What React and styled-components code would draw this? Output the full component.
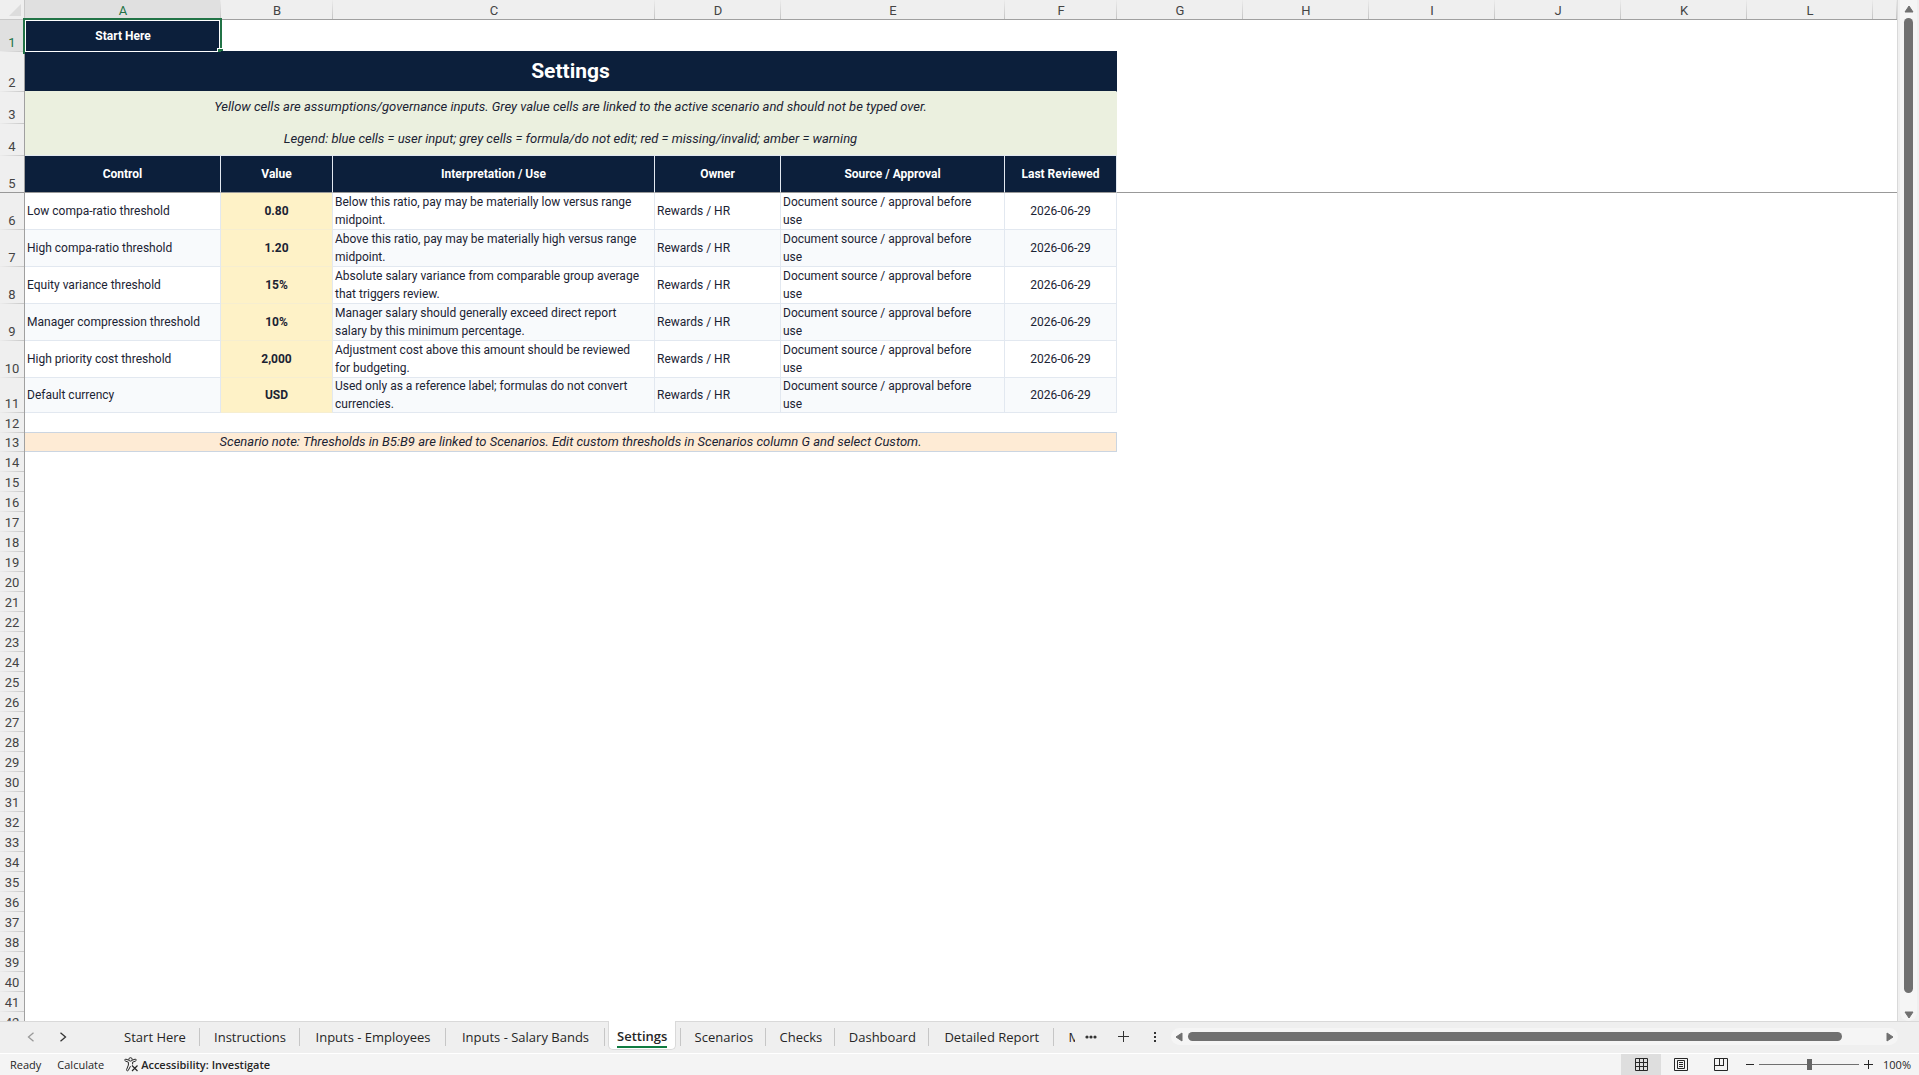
import React, { useState } from 'react';
import styled, { createGlobalStyle, css } from 'styled-components';

const navy = '#0c1f3b';
const green = '#217346';
const rule = '#e2e8f0';
const sage = '#ebf0df';
const chrome = '#efefef';
const sheetFont = "Roboto, 'Liberation Sans', sans-serif";
const uiFont = "'Open Sans', 'Noto Sans', sans-serif";

const GlobalStyle = createGlobalStyle`
  *, *::before, *::after { box-sizing: border-box; }
  body { margin: 0; background: ${chrome}; }
  button { border: 0; padding: 0; background: none; font: inherit; color: inherit; }
`;

const Window = styled.div`
  display: flex;
  flex-direction: column;
  height: 100vh;
  overflow: hidden;
  font-family: ${uiFont};
  color: #262626;
`;

const Workspace = styled.main`
  flex: 1;
  min-height: 0;
  display: grid;
  grid-template-columns: minmax(0, 1fr) 21px;
`;

const SheetPane = styled.div`
  min-height: 0;
  overflow: hidden;
  background: #fff;
  border-right: 1px solid #d9d9d9;
`;

const Sheet = styled.table`
  width: 100%;
  table-layout: fixed;
  border-collapse: separate;
  border-spacing: 0;
  font-family: ${sheetFont};
  font-size: 12px;
  line-height: 18px;
`;

const Col = styled.col`
  width: ${(p) => (p.$w ? `${p.$w}px` : 'auto')};
`;

const ColumnHead = styled.th`
  height: 20px;
  padding: 2px 0 0;
  border-bottom: 1px solid #a0a0a0;
  background: linear-gradient(#ececec, #c4c4c4) right / 1px 100% no-repeat,
    ${(p) => (p.$on ? '#e0e0e0' : chrome)};
  color: ${(p) => (p.$on ? green : '#444')};
  font-size: 13px;
  font-weight: 400;
  line-height: 17px;
  text-align: center;
`;

const Corner = styled.th`
  padding: 0;
  border-right: 1px solid #c8c8c8;
  border-bottom: 1px solid #c8c8c8;
  background: ${chrome};
`;

const CornerMark = styled.svg`
  display: block;
  margin: 0 3px 0 auto;
`;

const RowHead = styled.th`
  height: ${(p) => p.$h}px;
  padding: 0;
  vertical-align: bottom;
  border-right: 1px solid #a0a0a0;
  background: ${(p) =>
      p.$frozen ? 'linear-gradient(#999, #999)' : 'linear-gradient(90deg, #ececec, #c8c8c8)'}
      bottom / 100% 1px no-repeat,
    ${(p) => (p.$on ? '#e0e0e0' : chrome)};
  color: ${(p) => (p.$on ? green : '#444')};
  font-size: 13px;
  font-weight: 400;
  line-height: 19px;
  text-align: center;
`;

const cell = css`
  position: relative;
  padding: 0;
  vertical-align: top;
  border: 0 solid ${rule};
  border-right-width: ${(p) => (p.$open ? 0 : 1)}px;
  border-right-color: ${(p) => p.$side || rule};
  border-bottom-width: ${(p) => (p.$line ? 1 : 0)}px;
  border-bottom-color: ${(p) => p.$line};
  background: ${(p) => p.$fill || 'transparent'};
  font-weight: ${(p) => (p.$bold ? 700 : 400)};
  font-style: ${(p) => (p.$italic ? 'italic' : 'normal')};
  text-align: ${(p) => (p.$center ? 'center' : 'left')};
  color: ${(p) => p.$ink || '#1b2333'};
`;

const Cell = styled.td`${cell}`;
const HeadCell = styled.th`${cell}`;

const CellText = styled.div`
  display: flex;
  align-items: center;
  justify-content: ${(p) => (p.$center ? 'center' : 'flex-start')};
  height: ${(p) => p.$h - 1}px;
  padding: 0 2px;
  white-space: pre-line;
`;

const Title = styled.h1`
  margin: 0;
  font-size: 21px;
  line-height: 39px;
  text-align: center;
`;

const Note = styled.div`
  font-size: 13px;
  line-height: ${(p) => p.$h}px;
  text-align: center;
`;

const StartLink = styled.a`
  display: block;
  color: #fff;
  line-height: 32px;
  text-decoration: none;
`;

const Selection = styled.span`
  position: absolute;
  inset: -2px -1px -2px -2px;
  border: 2px solid ${green};
  box-shadow: inset 0 0 0 1px #fff;
  pointer-events: none;

  &::after {
    content: '';
    position: absolute;
    right: -3px;
    bottom: -3px;
    width: 5px;
    height: 6px;
    background: ${green};
    box-shadow: -1px -1px 0 #fff;
  }
`;

const VTrack = styled.div`
  display: flex;
  flex-direction: column;
  align-items: center;
  width: 17px;
  margin-left: 2px;
  padding: 5px 0 2px;
  border-radius: 0 0 9px 9px;
  background: #f5f5f5;
`;

const VThumb = styled.div`
  flex: 1;
  width: 9px;
  margin: 5px 0 18px;
  border-radius: 5px;
  background: #707070;
`;

const ArrowButton = styled.button`
  display: flex;
  align-items: center;
  justify-content: center;
  width: ${(p) => p.$w}px;
  height: ${(p) => p.$h}px;
`;

const BottomBar = styled.div`
  display: grid;
  grid-template-columns: minmax(0, 1fr) 38.3%;
  height: 32px;
  padding-right: 21px;
  background: ${chrome};
  box-shadow: inset 0 1px 0 #d9d9d9;
`;

const TabArea = styled.div`
  display: flex;
  min-width: 0;
`;

const NavButtons = styled.div`
  display: flex;
  width: 110px;
  flex-shrink: 0;
  padding-left: 15px;
`;

const IconButton = styled.button`
  display: flex;
  flex-shrink: 0;
  align-items: center;
  justify-content: center;
  width: ${(p) => p.$w}px;
  height: 31px;
  color: ${(p) => (p.$dim ? '#999' : '#333')};
`;

const Tabs = styled.nav`
  display: flex;
  flex: 1;
  min-width: 0;
  overflow: hidden;
`;

const divider = css`
  position: relative;
  flex-shrink: 0;

  &::after {
    content: '';
    position: absolute;
    right: 0;
    top: 7px;
    width: 1px;
    height: 18px;
    background: #c6c6c6;
  }
`;

const Tab = styled.button`
  ${divider}
  width: ${(p) => p.$w}px;
  height: 32px;
  font-size: 13px;
  line-height: 32px;
  white-space: nowrap;
`;

const ActiveSlot = styled.div`
  ${divider}
  padding: 0 5px 0 3px;
`;

const ActiveTab = styled.button`
  height: 29px;
  padding: 0 8px;
  border: 1px solid #d9d9d9;
  border-top: 0;
  border-radius: 0 0 5px 5px;
  background: #fff;
  font-size: 13px;
  font-weight: 600;
`;

const ActiveLabel = styled.span`
  display: block;
  height: 25px;
  border-bottom: 2px solid #107c41;
  line-height: 26px;
`;

const HTrack = styled.div`
  display: flex;
  align-items: center;
  height: 17px;
  margin-top: 7px;
  padding: 0 4px;
  border-radius: 9px;
  background: #f5f5f5;
`;

const HThumb = styled.div`
  flex: 1;
  height: 9px;
  margin: 0 44px 0 5px;
  border-radius: 5px;
  background: #707070;
`;

const StatusBar = styled.footer`
  display: flex;
  align-items: center;
  height: 22px;
  padding: 0 8px 0 10px;
  border-top: 1px solid #fff;
  background: #f4f4f4;
  font-size: 11px;
  line-height: 21px;
`;

const StatusItem = styled.span`
  margin-right: 16px;
`;

const AccessButton = styled.button`
  display: flex;
  align-items: center;
  gap: 2px;
  margin-left: 4px;
  font-weight: 600;
`;

const StatusRight = styled.div`
  display: flex;
  align-items: center;
  margin-left: auto;
`;

const ViewButton = styled.button`
  display: flex;
  align-items: center;
  justify-content: center;
  width: 40px;
  height: 21px;
  background: ${(p) => (p.$on ? '#dedede' : 'transparent')};
`;

const ZoomStep = styled.button`
  display: flex;
  align-items: center;
  justify-content: center;
  width: 18px;
  height: 21px;
`;

const ZoomSlider = styled.input`
  appearance: none;
  width: 100px;
  height: 21px;
  margin: 0;
  background: linear-gradient(#707070, #707070) center / 100% 1px no-repeat;

  &::-webkit-slider-thumb {
    appearance: none;
    width: 5px;
    height: 11px;
    background: #666;
  }
`;

const ZoomValue = styled.span`
  min-width: 34px;
  text-align: right;
`;

const widths = [25, 196, 112, 322, 126, 224, 112, 126, 126, 126, 126, 126, 126, 0];
const letters = ['A', 'B', 'C', 'D', 'E', 'F', 'G', 'H', 'I', 'J', 'K', 'L', ''];
const headings = ['Control', 'Value', 'Interpretation / Use', 'Owner', 'Source / Approval', 'Last Reviewed'];

const settings = [
  ['Low compa-ratio threshold', '0.80', 'Below this ratio, pay may be materially low versus range\nmidpoint.'],
  ['High compa-ratio threshold', '1.20', 'Above this ratio, pay may be materially high versus range\nmidpoint.'],
  ['Equity variance threshold', '15%', 'Absolute salary variance from comparable group average\nthat triggers review.'],
  ['Manager compression threshold', '10%', 'Manager salary should generally exceed direct report\nsalary by this minimum percentage.'],
  ['High priority cost threshold', '2,000', 'Adjustment cost above this amount should be reviewed\nfor budgeting.'],
  ['Default currency', 'USD', 'Used only as a reference label; formulas do not convert\ncurrencies.'],
];

const tabsBefore = [['Start Here', 90], ['Instructions', 100], ['Inputs - Employees', 146], ['Inputs - Salary Bands', 159]];
const tabsAfter = [['Scenarios', 85], ['Checks', 69], ['Dashboard', 94], ['Detailed Report', 125], ['M', 40]];
const blankRows = Array.from({ length: 29 }, (_, i) => i + 14);

function Triangle({ points, w, h }) {
  return (
    <svg width={w} height={h} viewBox={`0 0 ${w} ${h}`} aria-hidden="true">
      <polygon points={points} fill="#707070" stroke="#707070" strokeLinejoin="round" />
    </svg>
  );
}

function SettingRow({ data, index }) {
  const h = index === 5 ? 35 : 37;
  const fill = index % 2 ? '#f8fafc' : '#fff';
  const line = { $line: rule, $fill: fill };
  return (
    <tr>
      <RowHead scope="row" $h={h}>{index + 6}</RowHead>
      <Cell {...line}><CellText $h={h}>{data[0]}</CellText></Cell>
      <Cell $line="#f6eed0" $fill="#fef2c7" $bold><CellText $h={h} $center>{data[1]}</CellText></Cell>
      <Cell {...line}><CellText $h={h}>{data[2]}</CellText></Cell>
      <Cell {...line}><CellText $h={h}>Rewards / HR</CellText></Cell>
      <Cell {...line}><CellText $h={h}>{'Document source / approval before\nuse'}</CellText></Cell>
      <Cell {...line}><CellText $h={h} $center>2026-06-29</CellText></Cell>
      <Cell colSpan={7} $open />
    </tr>
  );
}

function SettingsSheet() {
  return (
    <Sheet>
      <colgroup>{widths.map((w, i) => <Col key={i} $w={w} />)}</colgroup>
      <thead>
        <tr>
          <Corner aria-label="Select all">
            <CornerMark width="12" height="12" viewBox="0 0 12 12" aria-hidden="true">
              <path d="M12 0V12H0Z" fill="#dcdcdc" />
            </CornerMark>
          </Corner>
          {letters.map((l, i) => <ColumnHead key={i} scope="col" $on={i === 0}>{l}</ColumnHead>)}
        </tr>
      </thead>
      <tbody>
        <tr>
          <RowHead scope="row" $h={32} $on>1</RowHead>
          <Cell $fill={navy} $bold $center $open>
            <StartLink href="#start-here">Start Here</StartLink>
            <Selection />
          </Cell>
          <Cell colSpan={5} $line={navy} $open />
          <Cell colSpan={7} $open />
        </tr>
        <tr>
          <RowHead scope="row" $h={40}>2</RowHead>
          <Cell colSpan={6} $fill={navy} $line={sage} $side={navy} $ink="#fff">
            <Title>Settings</Title>
          </Cell>
          <Cell colSpan={7} $open />
        </tr>
        <tr>
          <RowHead scope="row" $h={32}>3</RowHead>
          <Cell colSpan={6} $fill={sage} $line={sage} $side={sage} $italic>
            <Note $h={30}>
              Yellow cells are assumptions/governance inputs. Grey value cells are linked to the active scenario and
              should not be typed over.
            </Note>
          </Cell>
          <Cell colSpan={7} $open />
        </tr>
        <tr>
          <RowHead scope="row" $h={32}>4</RowHead>
          <Cell colSpan={6} $fill={sage} $line={rule} $side={sage} $italic>
            <Note $h={30}>
              Legend: blue cells = user input; grey cells = formula/do not edit; red = missing/invalid; amber = warning
            </Note>
          </Cell>
          <Cell colSpan={7} $open />
        </tr>
        <tr>
          <RowHead scope="row" $h={37} $frozen>5</RowHead>
          {headings.map((t) => (
            <HeadCell key={t} scope="col" $fill={navy} $line="#999" $ink="#fff" $bold $center>
              <CellText $h={37} $center>{t}</CellText>
            </HeadCell>
          ))}
          <Cell colSpan={7} $line="#999" $open />
        </tr>
        {settings.map((s, i) => <SettingRow key={s[0]} data={s} index={i} />)}
        <tr>
          <RowHead scope="row" $h={20}>12</RowHead>
          <Cell colSpan={6} $line="#cbd5e1" $open />
          <Cell colSpan={7} $open />
        </tr>
        <tr>
          <RowHead scope="row" $h={19}>13</RowHead>
          <Cell colSpan={6} $fill="#feebd5" $line="#cbd5e1" $side="#cbd5e1" $italic>
            <Note $h={18}>
              Scenario note: Thresholds in B5:B9 are linked to Scenarios. Edit custom thresholds in Scenarios column G
              and select Custom.
            </Note>
          </Cell>
          <Cell colSpan={7} $open />
        </tr>
        {blankRows.map((n) => (
          <tr key={n}>
            <RowHead scope="row" $h={20}>{n}</RowHead>
            <Cell colSpan={13} $open />
          </tr>
        ))}
      </tbody>
    </Sheet>
  );
}

function SheetTabs() {
  return (
    <BottomBar>
      <TabArea>
        <NavButtons>
          <IconButton $w={32} $dim aria-label="Previous sheet">
            <svg width="8" height="10" viewBox="0 0 8 10" fill="none" stroke="currentColor" strokeWidth="1.3"><path d="M6.5 .8 1.5 5l5 4.2" /></svg>
          </IconButton>
          <IconButton $w={32} aria-label="Next sheet">
            <svg width="8" height="10" viewBox="0 0 8 10" fill="none" stroke="currentColor" strokeWidth="1.3"><path d="M1.5 .8 6.5 5l-5 4.2" /></svg>
          </IconButton>
        </NavButtons>
        <Tabs aria-label="Sheets">
          {tabsBefore.map(([t, w]) => <Tab key={t} $w={w}>{t}</Tab>)}
          <ActiveSlot>
            <ActiveTab aria-current="page"><ActiveLabel>Settings</ActiveLabel></ActiveTab>
          </ActiveSlot>
          {tabsAfter.map(([t, w]) => <Tab key={t} $w={w}>{t}</Tab>)}
        </Tabs>
        <IconButton $w={32} aria-label="More sheets">
          <svg width="12" height="4" viewBox="0 0 12 4" fill="currentColor"><circle cx="2" cy="2" r="1.6" /><circle cx="6" cy="2" r="1.6" /><circle cx="10" cy="2" r="1.6" /></svg>
        </IconButton>
        <IconButton $w={32} aria-label="New sheet">
          <svg width="11" height="11" viewBox="0 0 11 11" stroke="currentColor"><path d="M5.5 0v11M0 5.5h11" /></svg>
        </IconButton>
        <IconButton $w={32} aria-label="Resize tab area">
          <svg width="2" height="10" viewBox="0 0 2 10" fill="currentColor"><path d="M0 0h2v2H0zM0 4h2v2H0zM0 8h2v2H0z" /></svg>
        </IconButton>
      </TabArea>
      <HTrack>
        <ArrowButton $w={8} $h={10} aria-label="Scroll left"><Triangle w={8} h={10} points="7,1 7,9 1,5" /></ArrowButton>
        <HThumb />
        <ArrowButton $w={8} $h={10} aria-label="Scroll right"><Triangle w={8} h={10} points="1,1 1,9 7,5" /></ArrowButton>
      </HTrack>
    </BottomBar>
  );
}

function Status() {
  const [zoom, setZoom] = useState(100);
  return (
    <StatusBar>
      <StatusItem>Ready</StatusItem>
      <StatusItem>Calculate</StatusItem>
      <AccessButton>
        <svg width="15" height="15" viewBox="0 0 15 15" fill="none" stroke="#262626" strokeWidth="1" aria-hidden="true">
          <circle cx="6.5" cy="2.4" r="1.7" />
          <path d="M4.8 3.2 2 2.2C.7 1.9.2 3.5 1.4 4L4.4 5.2V8L2.6 12.6C2.3 13.9 3.8 14.4 4.3 13.3L6.5 9.2M8.2 3.2 11 2.2C12.3 1.9 12.8 3.5 11.6 4L8.6 5.2V7.4" />
          <path d="M8 8.5l5.5 5.5M13.5 8.5L8 14" strokeWidth="1.2" />
        </svg>
        Accessibility: Investigate
      </AccessButton>
      <StatusRight>
        <ViewButton $on aria-label="Normal view">
          <svg width="13" height="13" viewBox="0 0 13 13" fill="none" stroke="#262626"><path d="M.5.5h12v12H.5zM4.5 0v13M8.5 0v13M0 4.5h13M0 8.5h13" /></svg>
        </ViewButton>
        <ViewButton aria-label="Page layout view">
          <svg width="14" height="13" viewBox="0 0 14 13" fill="none" stroke="#262626"><path d="M.5.5h13v12H.5zM3.5 2.5h7v8h-7zM5 4.5h4M5 6.5h4M5 8.5h4" /></svg>
        </ViewButton>
        <ViewButton aria-label="Page break preview">
          <svg width="14" height="13" viewBox="0 0 14 13" fill="none" stroke="#262626"><path d="M.5.5h13v12H.5zM5.5 0v7.5M9.5 0v7.5M0 7.5h10" /></svg>
        </ViewButton>
        <ZoomStep aria-label="Zoom out" onClick={() => setZoom(zoom - 10)}>
          <svg width="8" height="9" viewBox="0 0 8 9" stroke="#262626"><path d="M0 4.5h8" /></svg>
        </ZoomStep>
        <ZoomSlider
          type="range"
          min="0"
          max="200"
          value={zoom}
          aria-label="Zoom"
          onChange={(e) => setZoom(Number(e.target.value))}
        />
        <ZoomStep aria-label="Zoom in" onClick={() => setZoom(zoom + 10)}>
          <svg width="9" height="9" viewBox="0 0 9 9" stroke="#262626"><path d="M0 4.5h9M4.5 0v9" /></svg>
        </ZoomStep>
        <ZoomValue>{zoom}%</ZoomValue>
      </StatusRight>
    </StatusBar>
  );
}

export default function App() {
  return (
    <Window>
      <GlobalStyle />
      <Workspace>
        <SheetPane><SettingsSheet /></SheetPane>
        <VTrack>
          <ArrowButton $w={10} $h={8} aria-label="Scroll up"><Triangle w={10} h={8} points="1,7 9,7 5,1" /></ArrowButton>
          <VThumb />
          <ArrowButton $w={10} $h={8} aria-label="Scroll down"><Triangle w={10} h={8} points="1,1 9,1 5,7" /></ArrowButton>
        </VTrack>
      </Workspace>
      <SheetTabs />
      <Status />
    </Window>
  );
}
